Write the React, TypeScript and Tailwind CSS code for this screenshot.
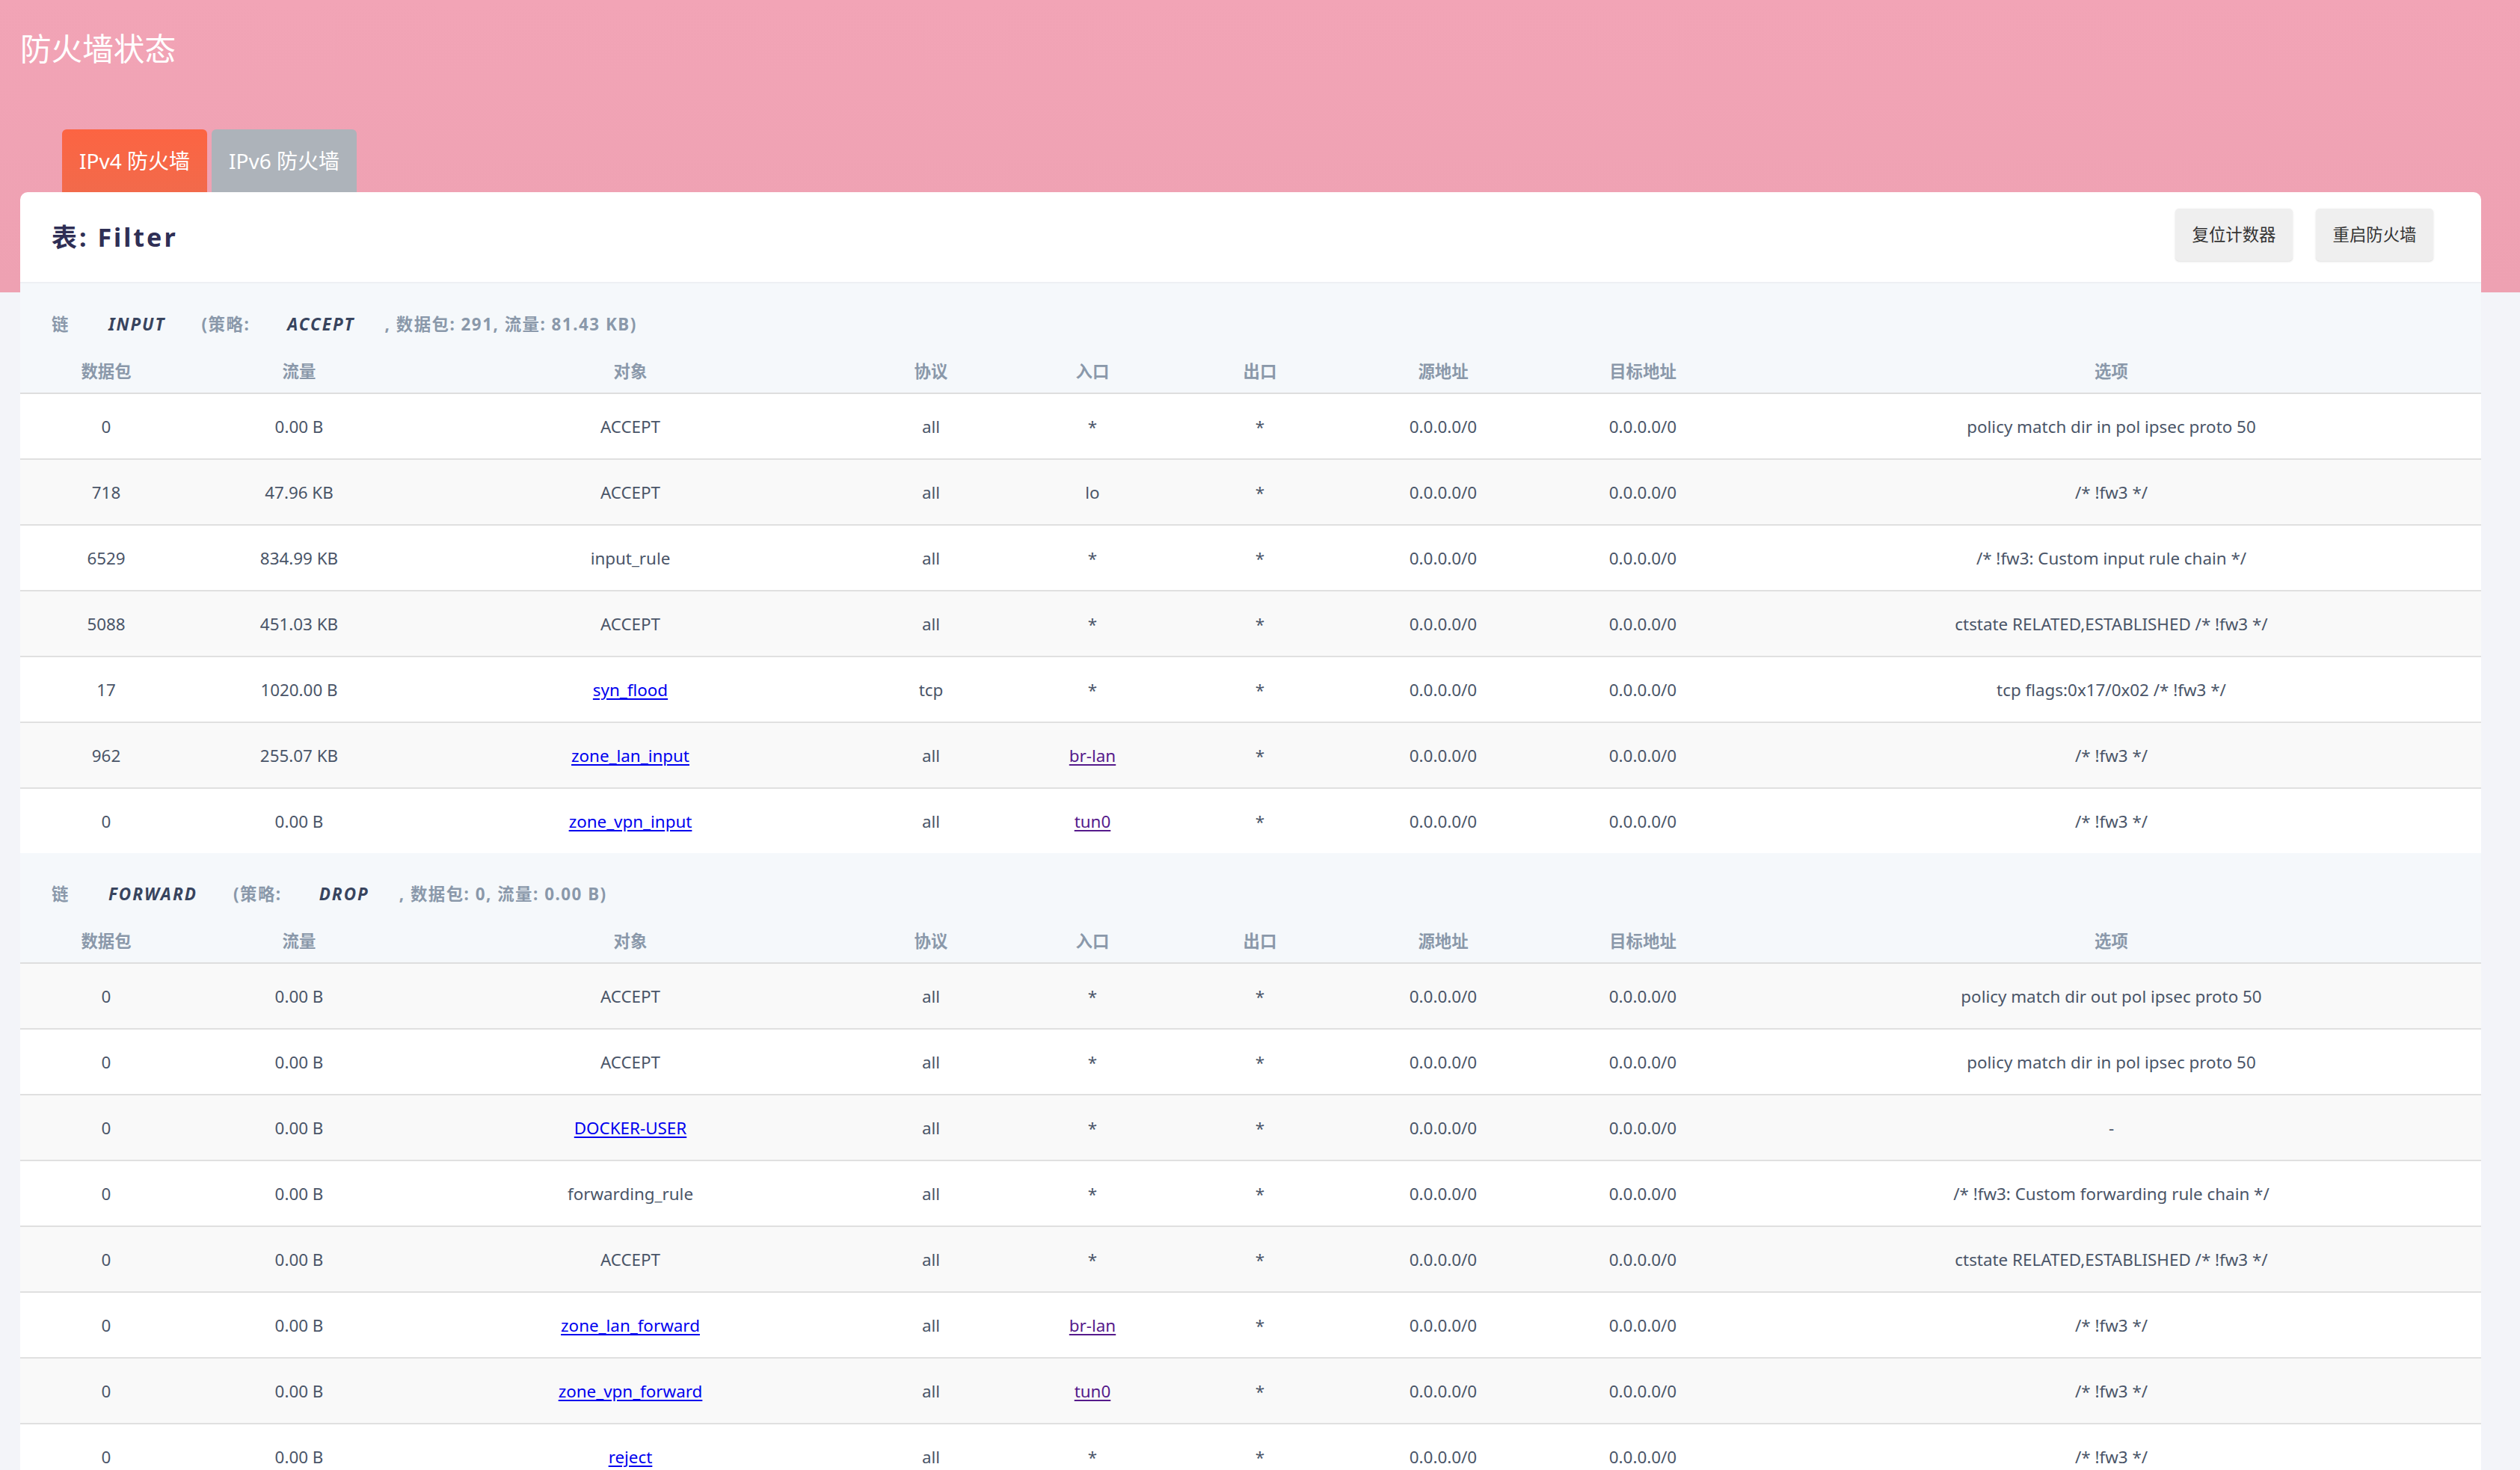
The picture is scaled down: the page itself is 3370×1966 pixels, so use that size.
import React from 'react';

type Cell = { text: string; link?: 'new' | 'visited' };

interface Rule {
  pkts: string;
  bytes: string;
  target: Cell;
  proto: string;
  inIf: Cell;
  outIf: string;
  src: string;
  dst: string;
  options: string;
}

interface Chain {
  name: string;
  policy: string;
  stats: string;
  rules: Rule[];
}

const r = (
  pkts: string,
  bytes: string,
  target: Cell,
  proto: string,
  inIf: Cell,
  options: string
): Rule => ({ pkts, bytes, target, proto, inIf, outIf: '*', src: '0.0.0.0/0', dst: '0.0.0.0/0', options });

const chains: Chain[] = [
  {
    name: 'INPUT',
    policy: 'ACCEPT',
    stats: ', 数据包: 291, 流量: 81.43 KB)',
    rules: [
      r('0', '0.00 B', { text: 'ACCEPT' }, 'all', { text: '*' }, 'policy match dir in pol ipsec proto 50'),
      r('718', '47.96 KB', { text: 'ACCEPT' }, 'all', { text: 'lo' }, '/* !fw3 */'),
      r('6529', '834.99 KB', { text: 'input_rule' }, 'all', { text: '*' }, '/* !fw3: Custom input rule chain */'),
      r('5088', '451.03 KB', { text: 'ACCEPT' }, 'all', { text: '*' }, 'ctstate RELATED,ESTABLISHED /* !fw3 */'),
      r('17', '1020.00 B', { text: 'syn_flood', link: 'new' }, 'tcp', { text: '*' }, 'tcp flags:0x17/0x02 /* !fw3 */'),
      r('962', '255.07 KB', { text: 'zone_lan_input', link: 'new' }, 'all', { text: 'br-lan', link: 'visited' }, '/* !fw3 */'),
      r('0', '0.00 B', { text: 'zone_vpn_input', link: 'new' }, 'all', { text: 'tun0', link: 'visited' }, '/* !fw3 */'),
    ],
  },
  {
    name: 'FORWARD',
    policy: 'DROP',
    stats: ', 数据包: 0, 流量: 0.00 B)',
    rules: [
      r('0', '0.00 B', { text: 'ACCEPT' }, 'all', { text: '*' }, 'policy match dir out pol ipsec proto 50'),
      r('0', '0.00 B', { text: 'ACCEPT' }, 'all', { text: '*' }, 'policy match dir in pol ipsec proto 50'),
      r('0', '0.00 B', { text: 'DOCKER-USER', link: 'new' }, 'all', { text: '*' }, '-'),
      r('0', '0.00 B', { text: 'forwarding_rule' }, 'all', { text: '*' }, '/* !fw3: Custom forwarding rule chain */'),
      r('0', '0.00 B', { text: 'ACCEPT' }, 'all', { text: '*' }, 'ctstate RELATED,ESTABLISHED /* !fw3 */'),
      r('0', '0.00 B', { text: 'zone_lan_forward', link: 'new' }, 'all', { text: 'br-lan', link: 'visited' }, '/* !fw3 */'),
      r('0', '0.00 B', { text: 'zone_vpn_forward', link: 'new' }, 'all', { text: 'tun0', link: 'visited' }, '/* !fw3 */'),
      r('0', '0.00 B', { text: 'reject', link: 'new' }, 'all', { text: '*' }, '/* !fw3 */'),
    ],
  },
];

const headers = ['数据包', '流量', '对象', '协议', '入口', '出口', '源地址', '目标地址', '选项'];

// column widths measured off the screenshot
const grid = 'grid grid-cols-[230px_286px_600px_204px_228px_220px_270px_264px_1fr]';

const LinkCell: React.FC<{ cell: Cell }> = ({ cell }) => {
  if (!cell.link) return <span>{cell.text}</span>;
  return (
    <a
      href="#"
      className={`underline underline-offset-[3px] ${cell.link === 'visited' ? 'text-[#551a8b]' : 'text-[#0000ee]'}`}
    >
      {cell.text}
    </a>
  );
};

const ChainBlock: React.FC<{ chain: Chain; offset: number }> = ({ chain, offset }) => (
  <div className="bg-[#f5f8fb]">
    <div className="h-[89px] pt-[38px] pl-[42px] flex text-[22.4px] leading-[34px] font-bold tracking-[1.5px] text-[#8a98aa]">
      <span>链</span>
      <span className="ml-[52px] italic tracking-[2px] text-[#38445e]">{chain.name}</span>
      <span className="ml-[48px]">(策略:</span>
      <span className="ml-[50px] italic tracking-[2px] text-[#38445e]">{chain.policy}</span>
      <span className="ml-[40px]">{chain.stats}</span>
    </div>
    <div className={`${grid} h-[59px] items-center border-b-2 border-[#dedede] text-center text-[22.4px] font-bold text-[#8a98aa]`}>
      {headers.map((h) => (
        <div key={h}>{h}</div>
      ))}
    </div>
    {chain.rules.map((rule, i) => {
      const stripe = (offset + i) % 2 === 0 ? 'bg-white' : 'bg-[#f9f9f9]';
      return (
        <div
          key={i}
          className={`${grid} items-center pt-[2px] text-center text-[22.4px] text-[#4a5568] ${stripe} ${
            i > 0 ? 'h-[88px] border-t-2 border-[#e0e0e0]' : 'h-[86px]'
          }`}
        >
          <div>{rule.pkts}</div>
          <div>{rule.bytes}</div>
          <div>
            <LinkCell cell={rule.target} />
          </div>
          <div>{rule.proto}</div>
          <div>
            <LinkCell cell={rule.inIf} />
          </div>
          <div>{rule.outIf}</div>
          <div>{rule.src}</div>
          <div>{rule.dst}</div>
          <div>{rule.options}</div>
        </div>
      );
    })}
  </div>
);

const font = "font-['Noto_Sans','Noto_Sans_CJK_SC',sans-serif]";

export default function App() {
  return (
    <div className={`min-h-screen bg-[linear-gradient(to_bottom,#f2a4b6_0px,#eea1b2_391px,#f3f4f9_391px)] pl-[27px] pr-[52px] ${font}`}>
      <h1 className="pt-[34px] text-[41.6px] leading-[63px] font-normal text-white">防火墙状态</h1>

      <div className="mt-[76px] ml-[56px] flex gap-[6px]">
        <div className={`h-[84px] w-[194px] rounded-t-[6px] bg-gradient-to-b from-[#fc6442] to-[#f26a4b] flex items-center justify-center text-[28px] text-white ${font}`}>
          IPv4 防火墙
        </div>
        <div className={`h-[84px] w-[194px] rounded-t-[6px] bg-[#adb3ba] flex items-center justify-center text-[28px] text-white ${font}`}>
          IPv6 防火墙
        </div>
      </div>

      <div className="rounded-t-[10px] bg-white overflow-hidden">
        <div className="h-[122px] border-b-2 border-[#eef0f4] flex items-center justify-between pl-[42px] pr-[64px]">
          <h2 className="text-[34px] font-bold tracking-[3px] text-[#2f2f55]">表: Filter</h2>
          <div className="flex gap-[31px] -mt-[6px]">
            <div className="h-[70px] w-[157px] rounded-[5px] bg-[#efefef] flex items-center justify-center text-[22.4px] text-[#333] shadow-sm">
              复位计数器
            </div>
            <div className="h-[70px] w-[157px] rounded-[5px] bg-[#efefef] flex items-center justify-center text-[22.4px] text-[#333] shadow-sm">
              重启防火墙
            </div>
          </div>
        </div>

        <ChainBlock chain={chains[0]} offset={0} />
        <ChainBlock chain={chains[1]} offset={chains[0].rules.length} />
      </div>
    </div>
  );
}
